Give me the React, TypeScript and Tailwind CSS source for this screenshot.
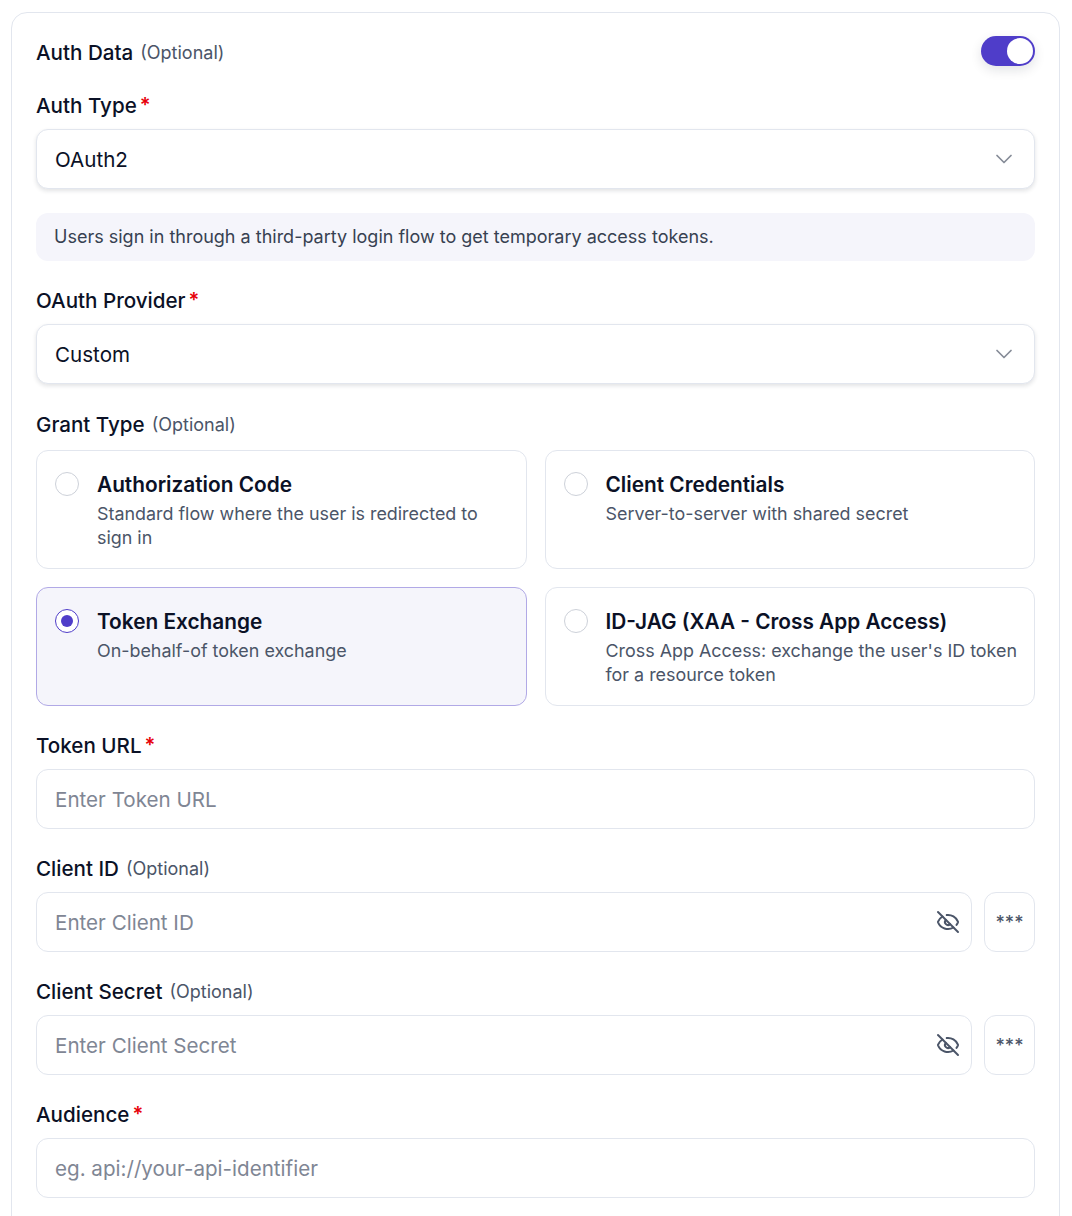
import { ChevronDown, EyeOff } from 'lucide-react';

const FONT = 'font-["Inter","Liberation_Sans",sans-serif]';

function Label({ text, required, className = '' }: { text: string; required?: boolean; className?: string }) {
  return (
    <div className={`flex h-6 items-center pt-[2px] text-[20.6px] font-medium leading-6 text-[#0b1126] ${className}`}>
      <span>{text}</span>
      {required ? (
        <span className="ml-[3px] -translate-y-px text-[20px] font-semibold text-[#e7000b]">*</span>
      ) : (
        <span className="ml-[7px] text-[18px] font-normal text-[#4b5568]">(Optional)</span>
      )}
    </div>
  );
}

function SelectBox({ value }: { value: string }) {
  return (
    <div className="flex h-[60px] items-center justify-between rounded-[12px] border border-[#e2e6ee] bg-white pl-[18px] pr-4 shadow-[0_2px_4px_rgba(15,23,42,0.12)]">
      <span className="pt-[2px] text-[20.6px] text-[#0b1126]">{value}</span>
      <ChevronDown size={28} strokeWidth={1.5} className="text-[#868c98]" />
    </div>
  );
}

function TextInput({ placeholder }: { placeholder: string }) {
  return (
    <div className="flex h-[60px] items-center rounded-[12px] border border-[#e2e6ee] bg-white px-[18px] pt-[2px] text-[20.6px] text-[#7f8694]">
      {placeholder}
    </div>
  );
}

function SecretInput({ placeholder }: { placeholder: string }) {
  return (
    <div className="flex gap-3">
      <div className="flex h-[60px] flex-1 items-center justify-between rounded-[12px] border border-[#e2e6ee] bg-white pl-[18px] pr-[11px] text-[20.6px] text-[#7f8694]">
        <span className="pt-[2px]">{placeholder}</span>
        <EyeOff size={24} strokeWidth={2} className="text-[#4b5568]" />
      </div>
      <div className="flex h-[60px] w-[51px] justify-center rounded-[12px] border border-[#e2e6ee] bg-white pt-5 text-[18px] font-medium leading-5 text-[#4b5568]">
        ***
      </div>
    </div>
  );
}

function GrantCard({ title, desc, selected }: { title: string; desc: string; selected?: boolean }) {
  return (
    <div
      className={`flex h-[119px] gap-[18px] rounded-[12px] border pl-[18px] pr-3 pt-[21px] ${
        selected ? 'border-[#b1a9e6] bg-[#f5f5fb]' : 'border-[#e2e6ee] bg-white'
      }`}
    >
      <div
        className={`flex h-6 w-6 shrink-0 items-center justify-center rounded-full border bg-white ${
          selected ? 'border-[#4f3dc9]' : 'border-[#cdd1d9]'
        }`}
      >
        {selected && <div className="h-3 w-3 rounded-full bg-[#4f3dc9]" />}
      </div>
      <div className="min-w-0">
        <div className="text-[20.8px] font-semibold leading-[26px] text-[#0b1126]">{title}</div>
        <div className="mt-1 text-[17.9px] leading-6 text-[#4b5568]">{desc}</div>
      </div>
    </div>
  );
}

export default function App() {
  return (
    <div className={`h-[1216px] overflow-hidden bg-white pl-[11px] pr-3 pt-3 ${FONT}`}>
      <div className="h-[1300px] rounded-[16px] border border-[#e2e6ee] bg-white px-6 pt-[23px]">
        <div className="flex h-[30px] items-center justify-between">
          <Label text="Auth Data" className="mt-[2px]" />
          <div className="flex h-[30px] w-[54px] items-center justify-end rounded-full bg-[#4f3dc9] pr-[2px] shadow-[0_4px_12px_rgba(15,23,42,0.12)]">
            <div className="h-[26px] w-[26px] rounded-full bg-white" />
          </div>
        </div>

        <Label text="Auth Type" required className="mt-[27px] mb-3" />
        <SelectBox value="OAuth2" />

        <div className="mt-6 flex h-12 items-center rounded-[12px] bg-[#f5f5fb] px-[18px] pb-[2px] text-[18px] text-[#374151]">
          Users sign in through a third-party login flow to get temporary access tokens.
        </div>

        <Label text="OAuth Provider" required className="mt-[27px] mb-3" />
        <SelectBox value="Custom" />

        <Label text="Grant Type" className="mt-7 mb-[14px]" />
        <div className="grid grid-cols-2 gap-[18px]">
          <GrantCard title="Authorization Code" desc="Standard flow where the user is redirected to sign in" />
          <GrantCard title="Client Credentials" desc="Server-to-server with shared secret" />
          <GrantCard title="Token Exchange" desc="On-behalf-of token exchange" selected />
          <GrantCard title="ID-JAG (XAA - Cross App Access)" desc="Cross App Access: exchange the user's ID token for a resource token" />
        </div>

        <Label text="Token URL" required className="mt-[27px] mb-3" />
        <TextInput placeholder="Enter Token URL" />

        <Label text="Client ID" className="mt-[27px] mb-3" />
        <SecretInput placeholder="Enter Client ID" />

        <Label text="Client Secret" className="mt-[27px] mb-3" />
        <SecretInput placeholder="Enter Client Secret" />

        <Label text="Audience" required className="mt-[27px] mb-3" />
        <TextInput placeholder="eg. api://your-api-identifier" />
      </div>
    </div>
  );
}
